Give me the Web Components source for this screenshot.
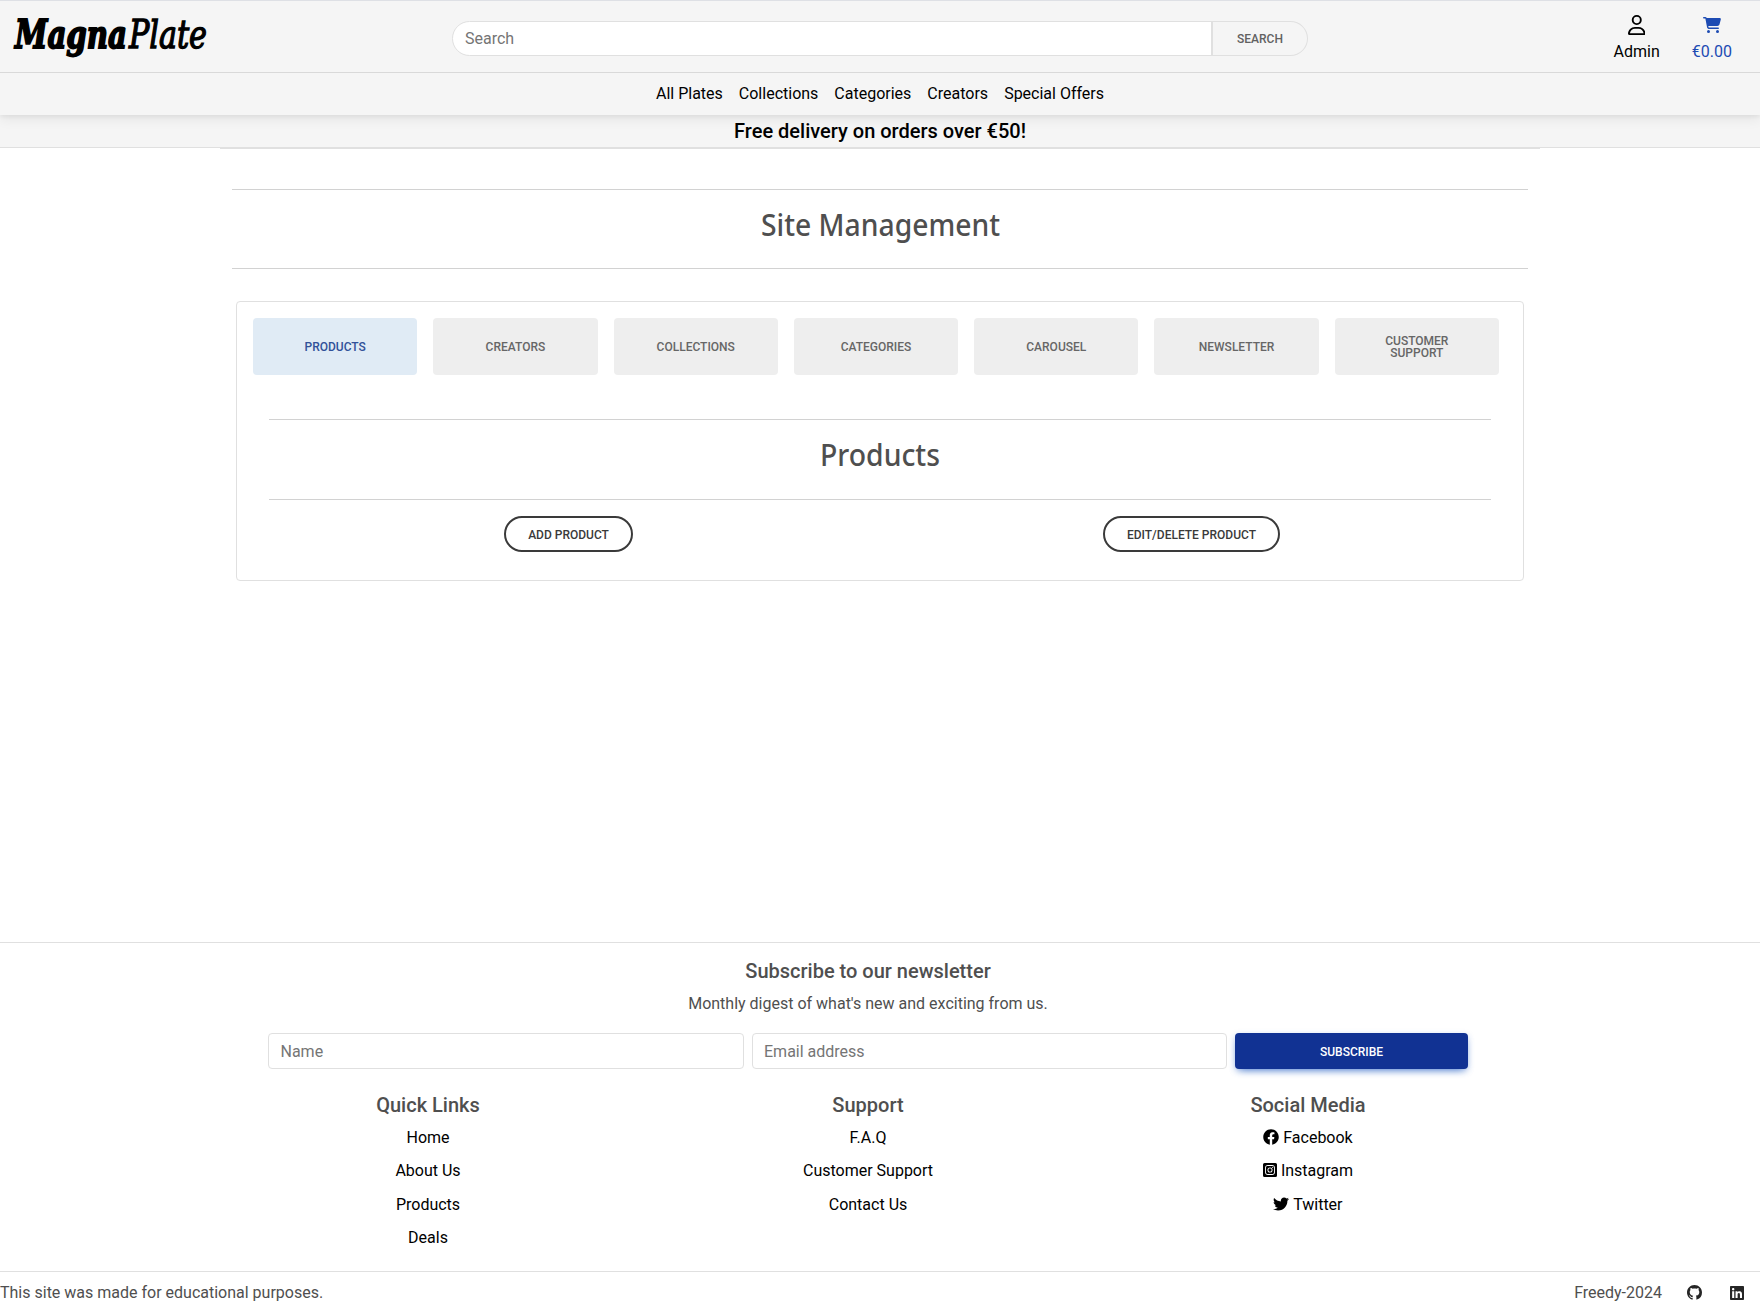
<!DOCTYPE html>
<html lang="en">
<head>
<meta charset="utf-8">
<title>MagnaPlate</title>
<style>
html,body{margin:0;height:100%}
body{font:400 16px/25.6px Roboto,sans-serif;color:#4f4f4f;background:#fff;overflow:hidden}
</style>
</head>
<body>
<mp-page></mp-page>
<script>
const define = (name, html) => {
  const t = document.createElement('template');
  t.innerHTML = '<style>*{box-sizing:border-box}a{color:inherit;text-decoration:none}</style>' + html;
  customElements.define(name, class extends HTMLElement {
    constructor() {
      super();
      this.attachShadow({mode: 'open'}).append(t.content.cloneNode(true));
    }
  });
};

const ICONS = {
  user: ['0 0 448 512', 'M304 128a80 80 0 1 0 -160 0 80 80 0 1 0 160 0zM96 128a128 128 0 1 1 256 0A128 128 0 1 1 96 128zM49.3 464H398.7c-8.9-63.3-63.3-112-129-112H178.3c-65.7 0-120.1 48.7-129 112zM0 482.3C0 383.8 79.8 304 178.3 304h91.4C368.2 304 448 383.8 448 482.3c0 16.4-13.3 29.7-29.7 29.7H29.7C13.3 512 0 498.7 0 482.3z'],
  cart: ['0 0 576 512', 'M0 24C0 10.7 10.7 0 24 0H69.5c22 0 41.5 12.8 50.6 32h411c26.3 0 45.5 25 38.6 50.4l-41 152.3c-8.5 31.4-37 53.3-69.5 53.3H170.7l5.4 28.5c2.2 11.3 12.1 19.5 23.6 19.5H488c13.3 0 24 10.7 24 24s-10.7 24-24 24H199.7c-34.6 0-64.3-24.6-70.7-58.5L77.4 54.5c-.7-3.8-4-6.5-7.9-6.5H24C10.7 48 0 37.3 0 24zM128 464a48 48 0 1 1 96 0 48 48 0 1 1 -96 0zm336-48a48 48 0 1 1 0 96 48 48 0 1 1 0-96z'],
  facebook: ['0 0 512 512', 'M504 256C504 119 393 8 256 8S8 119 8 256c0 123.78 90.69 226.38 209.25 245V327.69h-63V256h63v-54.64c0-62.15 37-96.48 93.67-96.48 27.14 0 55.52 4.84 55.52 4.84v61h-31.28c-30.8 0-40.41 19.12-40.41 38.73V256h68.78l-11 71.69h-57.78V501C413.31 482.38 504 379.78 504 256z'],
  instagram: ['0 0 448 512', 'M224,202.66A53.34,53.34,0,1,0,277.36,256,53.38,53.38,0,0,0,224,202.66Zm124.71-41a54,54,0,0,0-30.41-30.41c-21-8.29-71-6.43-94.3-6.43s-73.25-1.93-94.31,6.43a54,54,0,0,0-30.41,30.41c-8.28,21-6.43,71.05-6.43,94.33S91,329.26,99.32,350.33a54,54,0,0,0,30.41,30.41c21,8.29,71,6.43,94.31,6.43s73.24,1.93,94.3-6.43a54,54,0,0,0,30.41-30.41c8.35-21,6.43-71.05,6.43-94.33S357.1,182.74,348.75,161.67ZM224,338a82,82,0,1,1,82-82A81.9,81.9,0,0,1,224,338Zm85.38-148.3a19.14,19.14,0,1,1,19.13-19.14A19.1,19.1,0,0,1,309.42,189.74ZM400,32H48A48,48,0,0,0,0,80V432a48,48,0,0,0,48,48H400a48,48,0,0,0,48-48V80A48,48,0,0,0,400,32ZM382.88,322c-1.29,25.63-7.14,48.34-25.85,67s-41.4,24.63-67,25.85c-26.41,1.49-105.59,1.49-132,0-25.63-1.29-48.26-7.15-67-25.85s-24.63-41.42-25.85-67c-1.49-26.42-1.49-105.61,0-132,1.29-25.63,7.07-48.34,25.85-67s41.47-24.56,67-25.78c26.41-1.49,105.59-1.49,132,0,25.63,1.29,48.33,7.15,67,25.85s24.63,41.42,25.85,67.05C384.37,216.44,384.37,295.56,382.88,322Z'],
  twitter: ['0 0 512 512', 'M459.37 151.716c.325 4.548.325 9.097.325 13.645 0 138.72-105.583 298.558-298.558 298.558-59.452 0-114.68-17.219-161.137-47.106 8.447.974 16.568 1.299 25.34 1.299 49.055 0 94.213-16.568 130.274-44.832-46.132-.975-84.792-31.188-98.112-72.772 6.498.974 12.995 1.624 19.818 1.624 9.421 0 18.843-1.3 27.614-3.573-48.081-9.747-84.143-51.98-84.143-102.985v-1.299c13.969 7.797 30.214 12.67 47.431 13.319-28.264-18.843-46.781-51.005-46.781-87.391 0-19.492 5.197-37.36 14.294-52.954 51.655 63.675 129.3 105.258 216.365 109.807-1.624-7.797-2.599-15.918-2.599-24.04 0-57.828 46.782-104.934 104.934-104.934 30.213 0 57.502 12.67 76.67 33.137 23.715-4.548 46.456-13.32 66.599-25.34-7.798 24.366-24.366 44.833-46.132 57.827 21.117-2.273 41.584-8.122 60.426-16.243-14.292 20.791-32.161 39.308-52.628 54.253z'],
  linkedin: ['0 0 448 512', 'M416 32H31.9C14.3 32 0 46.5 0 64.3v383.4C0 465.5 14.3 480 31.9 480H416c17.6 0 32-14.5 32-32.3V64.3c0-17.8-14.4-32.3-32-32.3zM135.4 416H69V202.2h66.5V416zm-33.2-243c-21.3 0-38.5-17.3-38.5-38.5S80.9 96 102.2 96c21.2 0 38.5 17.3 38.5 38.5 0 21.3-17.2 38.5-38.5 38.5zm282.1 243h-66.4V312c0-24.8-.5-56.7-34.5-56.7-34.6 0-39.9 27-39.9 54.9V416h-66.4V202.2h63.7v29.2h.9c8.9-16.8 30.6-34.5 62.9-34.5 67.2 0 79.7 44.3 79.7 101.9V416z'],
  github: ['0 0 16 16', 'M8 0C3.58 0 0 3.58 0 8c0 3.54 2.29 6.53 5.47 7.59.4.07.55-.17.55-.38 0-.19-.01-.82-.01-1.49-2.01.37-2.53-.49-2.69-.94-.09-.23-.48-.94-.82-1.13-.28-.15-.68-.52-.01-.53.63-.01 1.08.58 1.23.82.72 1.21 1.87.87 2.33.66.07-.52.28-.87.51-1.07-1.78-.2-3.64-.89-3.64-3.95 0-.87.31-1.59.82-2.15-.08-.2-.36-1.02.08-2.12 0 0 .67-.21 2.2.82.64-.18 1.32-.27 2-.27s1.36.09 2 .27c1.53-1.04 2.2-.82 2.2-.82.44 1.1.16 1.92.08 2.12.51.56.82 1.27.82 2.15 0 3.07-1.87 3.75-3.65 3.95.29.25.54.73.54 1.48 0 1.07-.01 1.93-.01 2.2 0 .21.15.46.55.38A8.01 8.01 0 0 0 16 8c0-4.42-3.58-8-8-8z']
};
customElements.define('mp-icon', class extends HTMLElement {
  connectedCallback() {
    if (this.shadowRoot) return;
    const [box, d] = ICONS[this.getAttribute('name')];
    const size = this.getAttribute('size') || 16;
    this.attachShadow({mode: 'open'}).innerHTML =
      `<style>:host{display:inline-block;line-height:0;vertical-align:-2px}svg{display:block}</style>
       <svg height="${size}" width="${size * box.split(' ')[2] / box.split(' ')[3]}" viewBox="${box}"><path fill="currentColor" d="${d}"/></svg>`;
  }
});

// Ruled section heading, text condensed to the given width.
customElements.define('mp-title', class extends HTMLElement {
  connectedCallback() {
    if (this.shadowRoot) return;
    const w = this.getAttribute('width');
    this.attachShadow({mode: 'open'}).innerHTML =
      `<style>:host{display:flex;flex-direction:column;align-items:center;box-sizing:border-box;border-top:1px solid #d2d2d2;border-bottom:1px solid #d2d2d2}
       svg{display:block;margin-top:13px}text{font:500 31px "Noto Sans",sans-serif;fill:#4f4f4f}</style>
       <svg role="heading" width="${w}" height="46" overflow="visible"><text x="-1" y="32.5" textLength="${+w + 2}" lengthAdjust="spacingAndGlyphs">${this.getAttribute('text')}</text></svg>`;
  }
});

define('mp-logo', `<style>:host{display:block;width:196px;height:60px}svg{display:block}
text{font-family:"DejaVu Serif Condensed","DejaVu Serif",serif;font-style:italic;fill:#000;stroke:#000}</style>
<svg width="196" height="60" overflow="visible">
<text x="3" y="41.5" font-size="40" font-weight="700" stroke-width="1.8" textLength="112" lengthAdjust="spacingAndGlyphs">Magna</text>
<text x="117" y="41.5" font-size="39" stroke-width="1.3" textLength="78" lengthAdjust="spacingAndGlyphs">Plate</text></svg>`);

define('mp-search', `<style>:host{display:flex;width:856px;height:35px}
.in{flex:1;background:#fff;border:1px solid #e0e0e0;border-radius:18px 0 0 18px;padding:4px 12px;color:#757575}
button{width:97px;margin-left:-1px;border:1px solid #e0e0e0;border-left-width:2px;border-radius:0 18px 18px 0;background:#f5f5f5;color:#616161;font:500 12px/18px Roboto,sans-serif;padding:1px 0 0}</style>
<div class="in">Search</div><button>SEARCH</button>`);

define('mp-account', `<style>:host{display:flex;flex-direction:column;align-items:center;color:#000}
.i{height:25px;padding-bottom:3px;display:flex;align-items:center}</style><div class="i"><slot name="icon"></slot></div><slot></slot>`);

define('mp-header', `<style>:host{display:block;background:#f5f5f5;border-top:1px solid #dee0e5;height:115px;position:relative;z-index:1;box-shadow:0 4px 12px rgba(0,0,0,.07),0 2px 4px rgba(0,0,0,.05)}
.top{height:72px;border-bottom:1px solid #d9d9d9;display:grid;grid-template-columns:452px 856px 1fr;align-items:start}
mp-logo{margin:5px 0 0 12px}mp-search{margin-top:20px}
.acc{display:flex;justify-content:flex-end;gap:32px;padding:13px 28px 0 0}
nav{display:flex;justify-content:center;gap:16px;padding-top:8px;color:#000}
.cart{color:#1d4bb3}</style>
<div class="top"><mp-logo></mp-logo><mp-search></mp-search><div class="acc">
<mp-account><mp-icon slot="icon" name="user" size="20"></mp-icon>Admin</mp-account>
<mp-account class="cart"><mp-icon slot="icon" name="cart" size="16"></mp-icon>€0.00</mp-account></div></div>
<nav><a>All Plates</a><a>Collections</a><a>Categories</a><a>Creators</a><a>Special Offers</a></nav>`);

define('mp-banner', `<style>:host{display:block;height:34px;text-align:center;color:#000;font-size:20px;font-weight:500;line-height:24px}
div{height:33px;padding-top:4px;background:#f5f5f5;border-bottom:1px solid #e0e0e0}i{display:block;width:1320px;height:1px;margin:auto;background:#e0e0e0}</style>
<div><slot></slot></div><i></i>`);

define('mp-tab', `<style>:host{flex:1;height:57px;border-radius:4px;background:#eee;color:#666;font-size:12px;line-height:12px;font-weight:500;display:flex;align-items:center;justify-content:center;text-align:center;padding:1px 29px 0;box-sizing:border-box}
:host([active]){background:#e0ebf5;color:#315199}</style><slot></slot>`);

define('mp-pill', `<style>:host{display:block;border:2px solid #3a3a3a;border-radius:18px;height:36px;padding:8px 22px 0;box-sizing:border-box;color:#3a3a3a;font-size:12px;line-height:18px;font-weight:500}</style><slot></slot>`);

define('mp-panel', `<style>:host{display:block;width:1288px;height:280px;box-sizing:border-box;border:1px solid #e0e0e0;border-radius:4px}
.tabs{display:flex;gap:16px;padding:16px 24px 0 16px}mp-title{height:81px;margin:44px 32px 0}
.row{display:grid;grid-template-columns:1fr 1fr;margin:16px 20px 0;justify-items:center}</style>
<div class="tabs"><mp-tab active>PRODUCTS</mp-tab><mp-tab>CREATORS</mp-tab><mp-tab>COLLECTIONS</mp-tab><mp-tab>CATEGORIES</mp-tab><mp-tab>CAROUSEL</mp-tab><mp-tab>NEWSLETTER</mp-tab><mp-tab>CUSTOMER SUPPORT</mp-tab></div>
<mp-title text="Products" width="118"></mp-title>
<div class="row"><mp-pill>ADD PRODUCT</mp-pill><mp-pill>EDIT/DELETE PRODUCT</mp-pill></div>`);

define('mp-newsletter', `<style>:host{display:flex;flex-direction:column;align-items:center}
h5,p{margin:0}h5{font-size:20px;line-height:24px;font-weight:500}p{margin-top:8px}
.f{display:flex;gap:8px;width:1200px;margin-top:16.4px;height:36px}
.in{width:475.5px;border:1px solid #e0e0e0;border-radius:4px;padding:5px 12px 0 11.5px;color:#757575}
button{flex:1;border:0;border-radius:4px;background:#113293;color:#fff;font:500 12px/18px Roboto,sans-serif;padding:2px 0 0;box-shadow:0 4px 9px -4px #3b71ca,0 2px 6px rgba(59,113,202,.25)}</style>
<h5>Subscribe to our newsletter</h5><p>Monthly digest of what's new and exciting from us.</p>
<div class="f"><div class="in">Name</div><div class="in">Email address</div><button>SUBSCRIBE</button></div>`);

define('mp-links', `<style>:host{display:flex;flex-direction:column;align-items:center;gap:8px;color:#000}
h5{margin:0;font-size:20px;line-height:24px;font-weight:500;color:#4f4f4f}::slotted(a){display:block}</style>
<h5><slot name="title"></slot></h5><slot></slot>`);

define('mp-footer', `<style>:host{display:block;height:372px;border-top:1px solid #e0e0e0;box-sizing:border-box}
.main{width:1320px;height:328px;margin-left:208px;padding-top:16px}
.cols{display:grid;grid-template-columns:repeat(3,1fr);margin-top:23.6px;align-items:start}
.bar{border-top:1px solid #e0e0e0;display:flex;align-items:center;height:43px;padding-right:16px}
.by{margin-left:auto;margin-right:25px}.bar mp-icon{color:#262626}.bar .gh{margin:0 28px 2px 0}.bar .li{margin-bottom:1px}</style>
<div class="main"><mp-newsletter></mp-newsletter><div class="cols">
<mp-links><span slot="title">Quick Links</span><a>Home</a><a>About Us</a><a>Products</a><a>Deals</a></mp-links>
<mp-links><span slot="title">Support</span><a>F.A.Q</a><a>Customer Support</a><a>Contact Us</a></mp-links>
<mp-links><span slot="title">Social Media</span><a><mp-icon name="facebook"></mp-icon> Facebook</a><a><mp-icon name="instagram"></mp-icon> Instagram</a><a><mp-icon name="twitter"></mp-icon> Twitter</a></mp-links>
</div></div>
<div class="bar"><span>This site was made for educational purposes.</span><span class="by">Freedy-2024</span><mp-icon class="gh" name="github" size="15"></mp-icon><mp-icon class="li" name="linkedin"></mp-icon></div>`);

define('mp-page', `<style>:host{display:flex;flex-direction:column;height:1314px}
main{flex:1;display:flex;flex-direction:column;align-items:center;padding-top:40px}
.t{width:1296px;height:80px;margin-bottom:32px}</style>
<mp-header></mp-header><mp-banner>Free delivery on orders over €50!</mp-banner>
<main><mp-title class="t" text="Site Management" width="237"></mp-title><mp-panel></mp-panel></main>
<mp-footer></mp-footer>`);
</script>
</body>
</html>
